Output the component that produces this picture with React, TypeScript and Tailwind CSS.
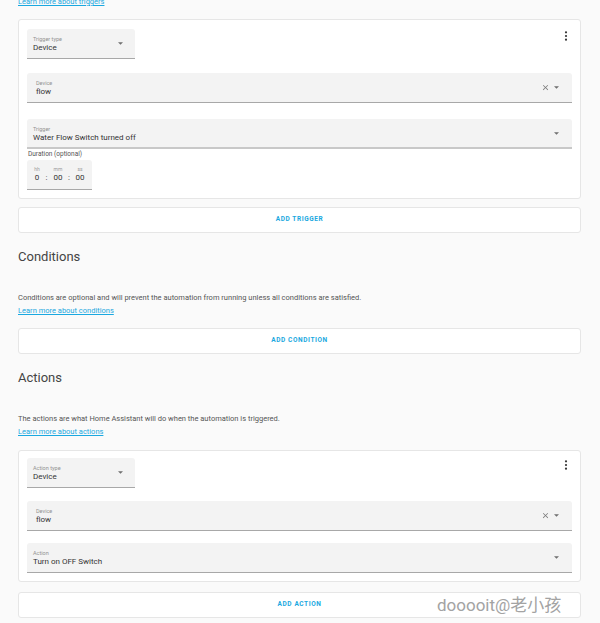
import type { ReactNode } from "react";

const Arrow = () => (
  <svg width="5" height="3" viewBox="0 0 10 5" className="shrink-0">
    <path d="M0 0 L5 5 L10 0 Z" fill="#6f6f6f" />
  </svg>
);

const Clear = () => (
  <svg width="9" height="9" viewBox="0 0 24 24" className="shrink-0">
    <path
      d="M19 6.41L17.59 5 12 10.59 6.41 5 5 6.41 10.59 12 5 17.59 6.41 19 12 13.41 17.59 19 19 17.59 13.41 12z"
      fill="#7a7a7a"
    />
  </svg>
);

const Kebab = () => (
  <svg width="4" height="10" viewBox="0 0 4 10">
    <circle cx="2" cy="1.3" r="1.1" fill="#333" />
    <circle cx="2" cy="5" r="1.1" fill="#333" />
    <circle cx="2" cy="8.7" r="1.1" fill="#333" />
  </svg>
);

function Field({
  label,
  value,
  clear,
  className = "",
  labelPad = "pl-[9px]",
}: {
  label: string;
  value: string;
  clear?: boolean;
  className?: string;
  labelPad?: string;
}) {
  return (
    <div
      className={`h-[30px] bg-[#f3f3f3] border-b border-[#a8a8a8] rounded-t-[3px] flex items-center pr-[13px] ${className}`}
    >
      <div className={`flex-1 flex flex-col pt-[2px] ${labelPad}`}>
        <span className="text-[5.5px] leading-[7px] text-[#929292]">{label}</span>
        <span className="text-[8px] leading-[10px] text-[#333]">{value}</span>
      </div>
      <div className="flex items-center gap-[4px]">
        {clear && <Clear />}
        <Arrow />
      </div>
    </div>
  );
}

function TypeSelect({ label, className = "" }: { label: string; className?: string }) {
  return (
    <div className={`flex justify-between ${className}`}>
      <div className="w-[108px] h-[30px] bg-[#f3f3f3] border-b border-[#a8a8a8] rounded-t-[3px] flex items-center pr-[12px]">
        <div className="flex-1 flex flex-col pl-[6px] pt-[1px]">
          <span className="text-[5.5px] leading-[7px] text-[#929292]">{label}</span>
          <span className="text-[8px] leading-[10px] text-[#333]">Device</span>
        </div>
        <Arrow />
      </div>
      <div className="pt-[2px] pr-[4px]">
        <Kebab />
      </div>
    </div>
  );
}

function AddButton({ text, className = "" }: { text: string; className?: string }) {
  return (
    <div
      className={`h-[26px] bg-white border border-[#e6e6e6] rounded-[3px] flex items-center justify-center ${className}`}
    >
      <span className="text-[6.5px] font-bold tracking-[0.6px] text-[#1aa8e0]">{text}</span>
    </div>
  );
}

function Section({
  title,
  text,
  link,
  children,
}: {
  title: string;
  text: string;
  link: string;
  children: ReactNode;
}) {
  return (
    <>
      <h2 className="mt-[15px] text-[13px] leading-[18px] text-[#444]">{title}</h2>
      <p className="mt-[25px] text-[7.5px] leading-[13px] text-[#555]">{text}</p>
      <a className="block text-[7.5px] leading-[13px] text-[#1aa8e0] underline">{link}</a>
      {children}
    </>
  );
}

export default function App() {
  return (
    <div
      className="relative w-[600px] h-[623px] overflow-hidden bg-[#fafafa] pl-[18px] pr-[19px]"
      style={{ fontFamily: "Roboto, 'Noto Sans CJK SC', sans-serif" }}
    >
      <a className="block -mt-[5px] text-[7.5px] leading-[13px] text-[#1aa8e0] underline">
        Learn more about triggers
      </a>

      {/* Trigger card */}
      <div className="mt-[11px] bg-white border border-[#e6e6e6] rounded-[3px] px-[8px] pt-[9px] pb-[8px]">
        <TypeSelect label="Trigger type" />
        <Field label="Device" value="flow" clear className="mt-[14px]" />
        <Field
          label="Trigger"
          value="Water Flow Switch turned off"
          className="mt-[16px] border-b-2 border-[#c8c8c8]"
          labelPad="pl-[6px]"
        />
        <div className="mt-[1px] text-[6.5px] leading-[9px] text-[#555] pl-[1px]">Duration (optional)</div>
        <div className="mt-[1px] w-[65px] h-[30px] bg-[#f3f3f3] border-b border-[#a8a8a8] rounded-t-[3px] flex items-center px-[7px] text-[#333]">
          <div className="flex flex-col items-center w-[6px]">
            <span className="text-[5px] leading-[7px] text-[#9a9a9a]">hh</span>
            <span className="text-[8px] leading-[10px]">0</span>
          </div>
          <span className="text-[8px] leading-[10px] mt-[7px] w-[13px] text-center">:</span>
          <div className="flex flex-col items-center w-[10px]">
            <span className="text-[5px] leading-[7px] text-[#9a9a9a]">mm</span>
            <span className="text-[8px] leading-[10px]">00</span>
          </div>
          <span className="text-[8px] leading-[10px] mt-[7px] w-[12px] text-center">:</span>
          <div className="flex flex-col items-center w-[10px]">
            <span className="text-[5px] leading-[7px] text-[#9a9a9a]">ss</span>
            <span className="text-[8px] leading-[10px]">00</span>
          </div>
        </div>
      </div>

      <AddButton text="ADD TRIGGER" className="mt-[8px]" />

      <Section
        title="Conditions"
        text="Conditions are optional and will prevent the automation from running unless all conditions are satisfied."
        link="Learn more about conditions"
      >
        <AddButton text="ADD CONDITION" className="mt-[11px]" />
      </Section>

      <Section
        title="Actions"
        text="The actions are what Home Assistant will do when the automation is triggered."
        link="Learn more about actions"
      >
        {/* Action card */}
        <div className="mt-[12px] bg-white border border-[#e6e6e6] rounded-[3px] px-[8px] pt-[7px] pb-[8px]">
          <TypeSelect label="Action type" />
          <Field label="Device" value="flow" clear className="mt-[13px]" />
          <Field label="Action" value="Turn on OFF Switch" className="mt-[12px]" labelPad="pl-[6px]" />
        </div>
        <AddButton text="ADD ACTION" className="mt-[10px]" />
      </Section>

      <div className="absolute left-[435px] top-[593px] text-[17px] leading-[24px] text-[#a3a3a3] bg-white/70 px-[2px]">
        dooooit@老小孩
      </div>
    </div>
  );
}
